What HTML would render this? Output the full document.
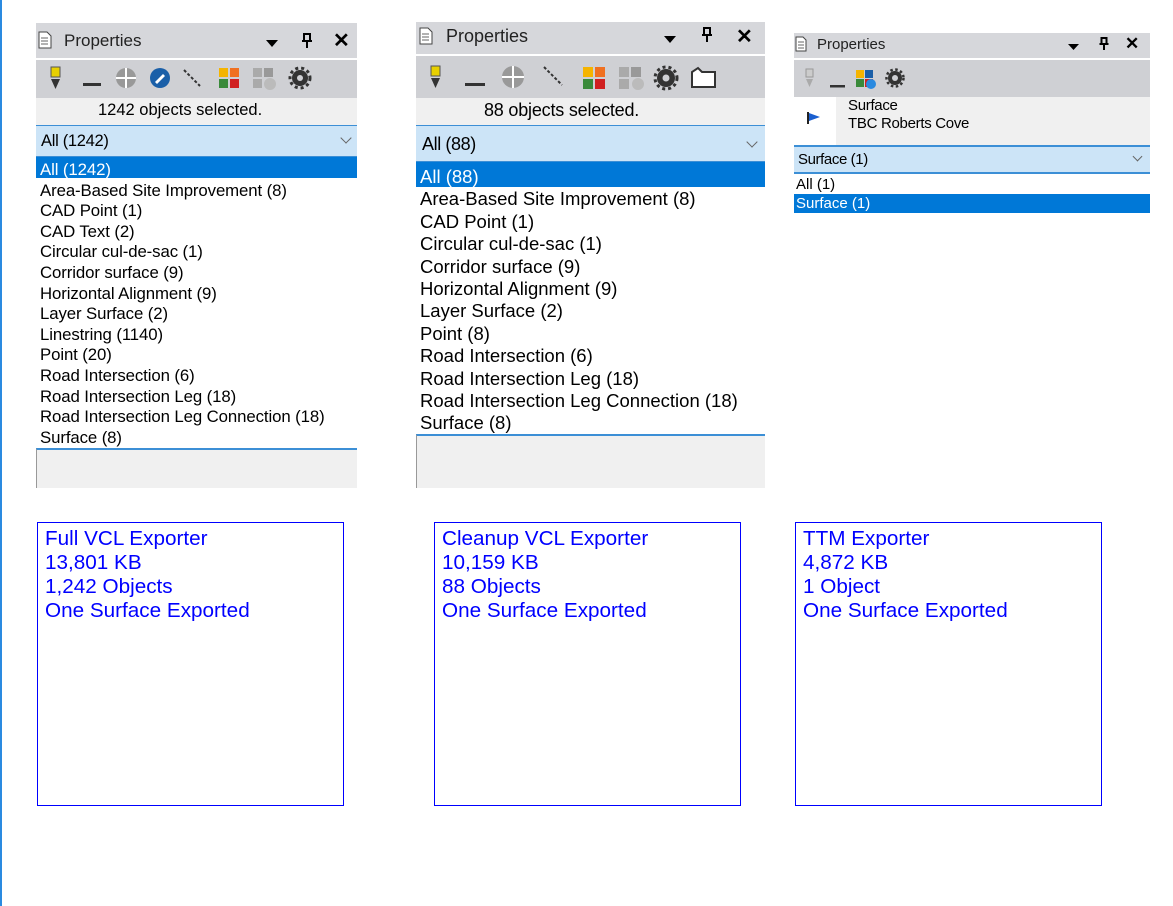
<!DOCTYPE html>
<html><head><meta charset="utf-8"><style>
*{margin:0;padding:0;box-sizing:border-box}
body{width:1173px;height:906px;background:#fff;position:relative;overflow:hidden;font-family:"Liberation Sans",Arial,sans-serif;color:#000}
.edge{position:absolute;left:0;top:0;width:2px;height:906px;background:#2a8ae0}
.p{position:absolute;background:#fff;overflow:hidden}
.abs{position:absolute}
.title{background:#d6d7db;color:#222}
.tb{background:#cfd0d4}
.gray{background:#f0f0f0}
.dd{background:#cce4f7;border-top:1px solid #3c8fd6;border-bottom:1px solid #3c8fd6}
.sel{background:#0078d7;color:#fff}
.row{white-space:nowrap}
.box{position:absolute;border:1px solid #0000ff;color:#0000ff;font-size:20.7px;line-height:24px;padding:4px 0 0 7px}
.chev{position:absolute;width:8px;height:8px;border-right:1.5px solid #666;border-bottom:1.5px solid #666;transform:rotate(45deg)}
</style></head><body>
<div class="edge"></div>

<!-- Panel 1 -->
<div class="p" style="left:36px;top:23px;width:321px;height:465px">
 <div class="abs title" style="left:0;top:0;width:321px;height:35px"></div>
 <svg class="abs" style="left:2px;top:8px" width="14" height="18"><path d="M1 1h8l4 4v12H1z" fill="#fff" stroke="#444"/><path d="M3 7h7M3 10h7M3 13h7" stroke="#666"/></svg>
 <div class="abs" style="left:28px;top:8px;font-size:17px;color:#222">Properties</div>
 <svg class="abs" style="left:230px;top:17px" width="12" height="7"><path d="M0 0h12L6 7z" fill="#000"/></svg>
 <svg class="abs" style="left:265px;top:10px" width="12" height="16"><path d="M3 1h6v7H3zM1 8h10M6 8v7" stroke="#000" stroke-width="2" fill="none"/></svg>
 <div class="abs" style="left:297px;top:5px;font-size:20px;font-weight:bold">✕</div>
 <div class="abs tb" style="left:0;top:37px;width:321px;height:38px"></div>
 <svg class="abs" style="left:10px;top:42px" width="280" height="28">
  <rect x="5" y="2" width="9" height="10" fill="#e8d000" stroke="#555"/><path d="M5 14h9l-4.5 10z" fill="#333"/>
  <rect x="37" y="18" width="18" height="3" fill="#333"/>
  <circle cx="80" cy="13" r="10" fill="#999"/><path d="M80 3v20M70 13h20" stroke="#fff" stroke-width="2"/>
  <circle cx="114" cy="13" r="10" fill="#1a5fa8"/><path d="M109 17l8-8 2 2-8 8z" fill="#fff"/>
  <path d="M138 5l16 16" stroke="#333" stroke-width="2" stroke-dasharray="3 2"/>
  <rect x="173" y="3" width="9" height="9" fill="#f5b400"/><rect x="184" y="3" width="9" height="9" fill="#f07020"/><rect x="173" y="14" width="9" height="9" fill="#3a8a3a"/><rect x="184" y="14" width="9" height="9" fill="#d02020"/>
  <rect x="207" y="3" width="9" height="9" fill="#aaa"/><rect x="218" y="3" width="9" height="9" fill="#999"/><rect x="207" y="14" width="9" height="9" fill="#aaa"/><circle cx="224" cy="19" r="6" fill="#bbb"/>
  <circle cx="254" cy="13" r="8" fill="#333"/><circle cx="254" cy="13" r="10" fill="none" stroke="#333" stroke-width="3" stroke-dasharray="3 3"/><circle cx="254" cy="13" r="3" fill="#cfd0d4"/>
 </svg>
 <div class="abs gray" style="left:0;top:75px;width:321px;height:27px"></div>
 <div class="abs" style="left:62px;top:78px;font-size:16.5px">1242 objects selected.</div>
 <div class="abs dd" style="left:0;top:102px;width:321px;height:32px"></div>
 <div class="abs" style="left:5px;top:109px;font-size:16.5px;letter-spacing:-0.3px">All (1242)</div>
 <div class="chev" style="left:306px;top:111px"></div>
 <div class="abs sel" style="left:0;top:134px;width:321px;height:21px"></div>
 <div class="abs row" style="left:4px;top:137px;font-size:16.8px;line-height:20.6px;letter-spacing:-0.1px">
  <div style="color:#fff">All (1242)</div>
  <div>Area-Based Site Improvement (8)</div><div>CAD Point (1)</div><div>CAD Text (2)</div><div>Circular cul-de-sac (1)</div><div>Corridor surface (9)</div><div>Horizontal Alignment (9)</div><div>Layer Surface (2)</div><div>Linestring (1140)</div><div>Point (20)</div><div>Road Intersection (6)</div><div>Road Intersection Leg (18)</div><div>Road Intersection Leg Connection (18)</div><div>Surface (8)</div>
 </div>
 <div class="abs gray" style="left:0;top:425px;width:321px;height:40px;border-top:2px solid #3c8fd6;border-left:1px solid #999"></div>
</div>

<!-- Panel 2 -->
<div class="p" style="left:416px;top:22px;width:349px;height:466px">
 <div class="abs title" style="left:0;top:0;width:349px;height:32px"></div>
 <svg class="abs" style="left:3px;top:5px" width="14" height="18"><path d="M1 1h8l4 4v12H1z" fill="#fff" stroke="#444"/><path d="M3 7h7M3 10h7M3 13h7" stroke="#666"/></svg>
 <div class="abs" style="left:30px;top:4px;font-size:18px;color:#222">Properties</div>
 <svg class="abs" style="left:248px;top:14px" width="12" height="7"><path d="M0 0h12L6 7z" fill="#000"/></svg>
 <svg class="abs" style="left:285px;top:5px" width="12" height="16"><path d="M3 1h6v7H3zM1 8h10M6 8v7" stroke="#000" stroke-width="2" fill="none"/></svg>
 <div class="abs" style="left:320px;top:2px;font-size:20px;font-weight:bold">✕</div>
 <div class="abs tb" style="left:0;top:34px;width:349px;height:42px"></div>
 <svg class="abs" style="left:10px;top:42px" width="330" height="28">
  <rect x="5" y="2" width="9" height="10" fill="#e8d000" stroke="#555"/><path d="M5 14h9l-4.5 10z" fill="#333"/>
  <rect x="39" y="19" width="20" height="3" fill="#333"/>
  <circle cx="87" cy="13" r="11" fill="#999"/><path d="M87 2v22M76 13h22" stroke="#fff" stroke-width="2"/>
  <path d="M118 3l18 18" stroke="#333" stroke-width="2" stroke-dasharray="3 2"/>
  <rect x="157" y="3" width="10" height="10" fill="#f5b400"/><rect x="169" y="3" width="10" height="10" fill="#f07020"/><rect x="157" y="15" width="10" height="10" fill="#3a8a3a"/><rect x="169" y="15" width="10" height="10" fill="#d02020"/>
  <rect x="193" y="3" width="10" height="10" fill="#aaa"/><rect x="205" y="3" width="10" height="10" fill="#999"/><rect x="193" y="15" width="10" height="10" fill="#aaa"/><circle cx="212" cy="20" r="6" fill="#bbb"/>
  <circle cx="240" cy="14" r="9" fill="#333"/><circle cx="240" cy="14" r="11" fill="none" stroke="#333" stroke-width="3" stroke-dasharray="3 3"/><circle cx="240" cy="14" r="3.5" fill="#cfd0d4"/>
  <path d="M266 23V8l6-4 4 4h13v15z" fill="#fff" stroke="#333" stroke-width="2"/>
 </svg>
 <div class="abs gray" style="left:0;top:76px;width:349px;height:27px"></div>
 <div class="abs" style="left:68px;top:78px;font-size:18px;letter-spacing:-0.2px">88 objects selected.</div>
 <div class="abs dd" style="left:0;top:103px;width:349px;height:37px"></div>
 <div class="abs" style="left:6px;top:112px;font-size:18px;letter-spacing:-0.4px">All (88)</div>
 <div class="chev" style="left:332px;top:116px"></div>
 <div class="abs sel" style="left:0;top:140px;width:349px;height:25px"></div>
 <div class="abs row" style="left:4px;top:144px;font-size:18.5px;line-height:22.4px">
  <div style="color:#fff">All (88)</div>
  <div>Area-Based Site Improvement (8)</div><div>CAD Point (1)</div><div>Circular cul-de-sac (1)</div><div>Corridor surface (9)</div><div>Horizontal Alignment (9)</div><div>Layer Surface (2)</div><div>Point (8)</div><div>Road Intersection (6)</div><div>Road Intersection Leg (18)</div><div>Road Intersection Leg Connection (18)</div><div>Surface (8)</div>
 </div>
 <div class="abs gray" style="left:0;top:412px;width:349px;height:54px;border-top:2px solid #3c8fd6;border-left:1px solid #999"></div>
</div>

<!-- Panel 3 -->
<div class="p" style="left:794px;top:33px;width:356px;height:180px">
 <div class="abs title" style="left:0;top:0;width:356px;height:25px"></div>
 <svg class="abs" style="left:1px;top:3px" width="12" height="16"><path d="M1 1h7l3 3v11H1z" fill="#fff" stroke="#444"/><path d="M3 6h6M3 9h6M3 12h6" stroke="#666"/></svg>
 <div class="abs" style="left:23px;top:3px;font-size:15px;color:#222">Properties</div>
 <svg class="abs" style="left:274px;top:11px" width="11" height="6"><path d="M0 0h11L5.5 6z" fill="#000"/></svg>
 <svg class="abs" style="left:305px;top:4px" width="10" height="14"><path d="M2.5 1h5v6h-5zM0.5 7h9M5 7v6" stroke="#000" stroke-width="2" fill="none"/></svg>
 <div class="abs" style="left:331px;top:1px;font-size:17px;font-weight:bold">✕</div>
 <div class="abs tb" style="left:0;top:27px;width:356px;height:37px"></div>
 <svg class="abs" style="left:8px;top:34px" width="120" height="24">
  <rect x="4" y="2" width="7" height="8" fill="#ccc" stroke="#999"/><path d="M4 12h7l-3.5 8z" fill="#aaa"/>
  <rect x="28" y="18" width="15" height="2.5" fill="#333"/>
  <rect x="54" y="3" width="8" height="8" fill="#f5b400"/><rect x="63" y="3" width="8" height="8" fill="#1a5fa8"/><rect x="54" y="12" width="8" height="8" fill="#3a8a3a"/><rect x="63" y="12" width="8" height="8" fill="#d02020"/><circle cx="69" cy="17" r="5" fill="#2a8ae0"/>
  <circle cx="93" cy="11" r="7" fill="#333"/><circle cx="93" cy="11" r="8.5" fill="none" stroke="#333" stroke-width="2.5" stroke-dasharray="2.5 2.5"/><circle cx="93" cy="11" r="3" fill="#cfd0d4"/>
 </svg>
 <div class="abs" style="left:0;top:64px;width:42px;height:48px;background:#fff"></div>
 <div class="abs gray" style="left:42px;top:64px;width:314px;height:48px"></div>
 <svg class="abs" style="left:12px;top:78px" width="16" height="14"><path d="M2 1v12" stroke="#222" stroke-width="2"/><path d="M3 2l11 4-11 4z" fill="#1a5fd0"/></svg>
 <div class="abs" style="left:54px;top:64px;font-size:15px;line-height:18px;letter-spacing:-0.3px">Surface<br>TBC Roberts Cove</div>
 <div class="abs dd" style="left:0;top:112px;width:356px;height:29px;border-width:2px"></div>
 <div class="abs" style="left:4px;top:118px;font-size:15px;letter-spacing:-0.4px">Surface (1)</div>
 <div class="chev" style="left:340px;top:120px;width:7px;height:7px"></div>
 <div class="abs row" style="left:2px;top:143px;font-size:15px;line-height:18px">All (1)</div>
 <div class="abs sel" style="left:0;top:161px;width:356px;height:19px"></div>
 <div class="abs row" style="left:2px;top:161px;font-size:15px;line-height:19px;color:#fff">Surface (1)</div>
</div>

<div class="box" style="left:37px;top:522px;width:307px;height:284px">Full VCL Exporter<br>13,801 KB<br>1,242 Objects<br>One Surface Exported</div>
<div class="box" style="left:434px;top:522px;width:307px;height:284px">Cleanup VCL Exporter<br>10,159 KB<br>88 Objects<br>One Surface Exported</div>
<div class="box" style="left:795px;top:522px;width:307px;height:284px">TTM Exporter<br>4,872 KB<br>1 Object<br>One Surface Exported</div>
</body></html>
